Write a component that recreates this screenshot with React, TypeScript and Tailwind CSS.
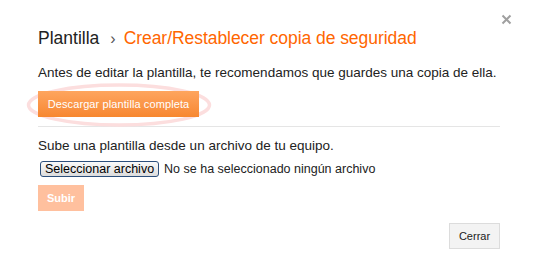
import React from "react";

const font = { fontFamily: '"Liberation Sans", Arial, sans-serif' };

function CloseIcon() {
  return (
    <svg width="11" height="11" viewBox="0 0 11 11" className="block">
      <path d="M1.5 1.5 L9.5 9.5 M9.5 1.5 L1.5 9.5" stroke="#a0a0a0" strokeWidth="2" />
    </svg>
  );
}

export default function App() {
  return (
    <div className="relative w-[539px] h-[276px] bg-white text-[#222]" style={font}>
      <button className="absolute top-[14px] right-[27px]">
        <CloseIcon />
      </button>

      <div className="pl-[38px] pr-[39px] pt-[28px]">
        <h2 className="flex items-baseline text-[17.5px] leading-[21px]">
          <span className="text-[#222]">Plantilla</span>
          <span className="ml-[11px] mr-[8px] text-[16px] text-[#555]">›</span>
          <span className="text-[#ff6600] tracking-[-0.05px]">Crear/Restablecer copia de seguridad</span>
        </h2>

        <p className="mt-[16px] text-[13.5px] leading-[15px]">
          Antes de editar la plantilla, te recomendamos que guardes una copia de ella.
        </p>

        <div className="relative mt-[11px] h-[26px]">
          <svg
            className="absolute left-[-12px] top-[-8px]"
            width="186"
            height="44"
            viewBox="0 0 186 44"
          >
            <ellipse cx="93" cy="22" rx="90.5" ry="20" fill="none" stroke="#fcdede" strokeWidth="3.5" />
          </svg>
          <button className="relative h-[26px] w-[161px] bg-gradient-to-b from-[#fea55e] to-[#f7872f] text-[11px] text-white tracking-[0.1px]">
            Descargar plantilla completa
          </button>
        </div>

        <div className="mt-[9px] border-t border-[#e5e5e5]" />

        <p className="mt-[11px] text-[13.5px] leading-[15px]">
          Sube una plantilla desde un archivo de tu equipo.
        </p>

        <div className="mt-[8px] flex items-center pl-[2px]">
          <span className="h-[16px] px-[4px] flex items-center rounded-[3px] border border-[#2c4f7c] bg-gradient-to-b from-[#fafafa] to-[#dcdcdc] text-[12.5px] leading-[14px] text-black">
            Seleccionar archivo
          </span>
          <span className="ml-[5px] text-[12.5px] leading-[15px]">No se ha seleccionado ningún archivo</span>
        </div>

        <button className="mt-[8px] h-[26px] w-[46px] bg-[#ffc09e] text-[11px] font-bold text-white">
          Subir
        </button>

        <div className="mt-[12px] flex justify-end">
          <button className="h-[26px] w-[51px] border border-[#dcdcdc] bg-[#f3f3f3] text-[11px] text-[#222]">
            Cerrar
          </button>
        </div>
      </div>
    </div>
  );
}
